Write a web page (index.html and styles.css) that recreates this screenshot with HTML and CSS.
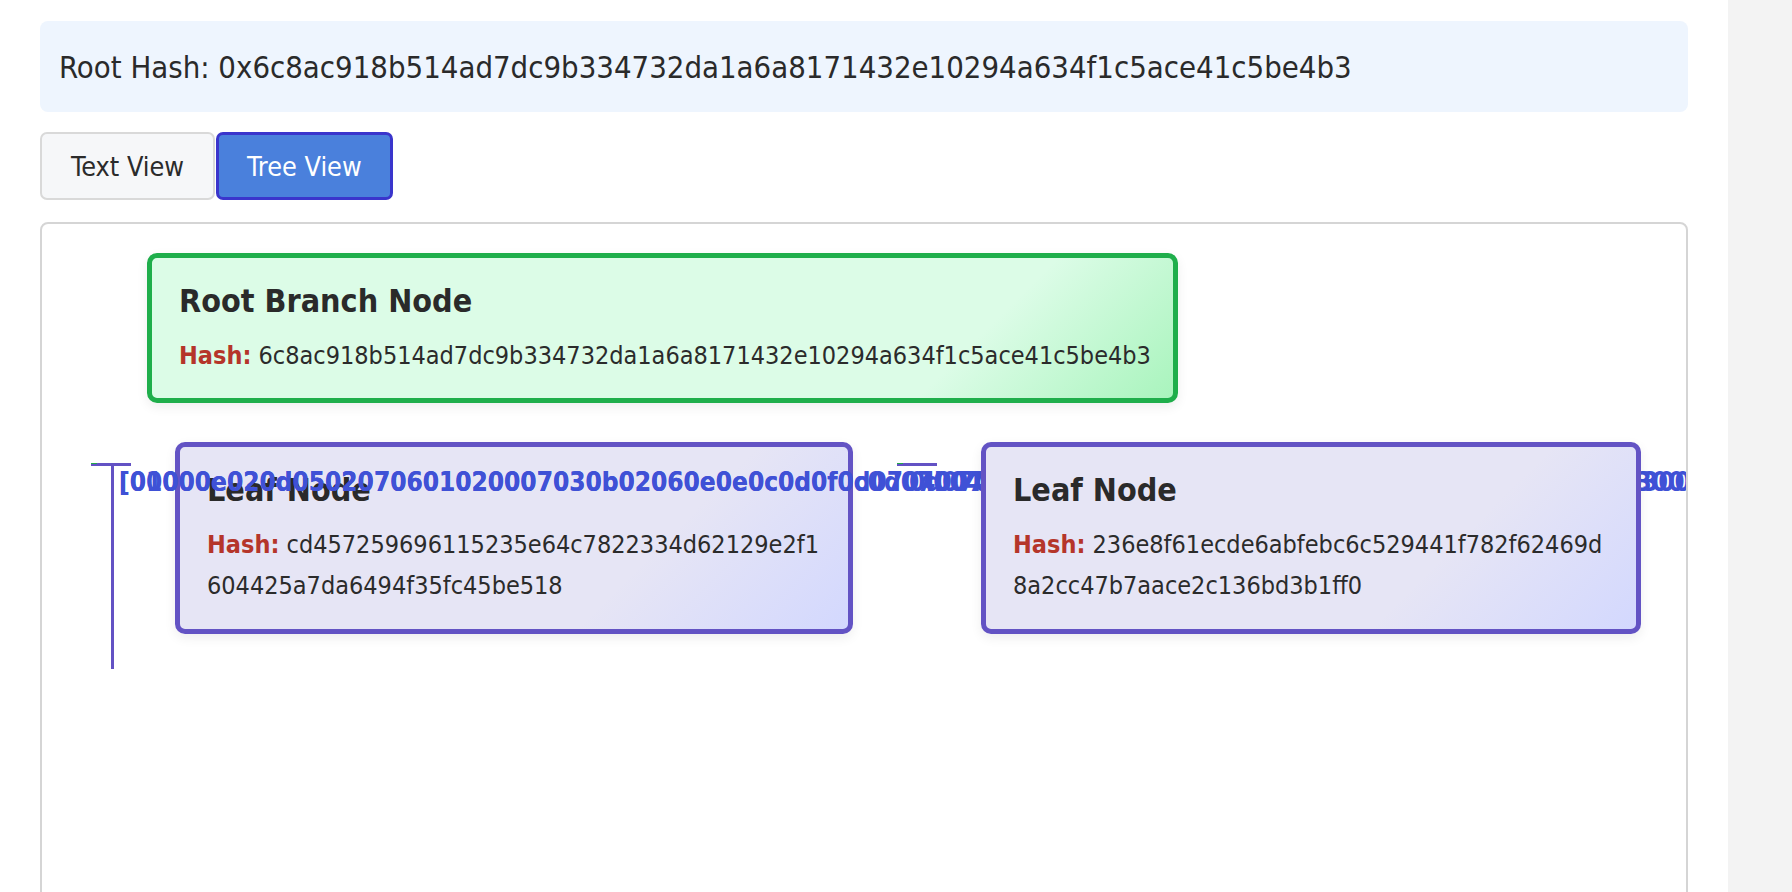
FILE: index.html
```html
<!DOCTYPE html>
<html lang="en">
<head>
<meta charset="utf-8">
<title>Merkle Tree Viewer</title>
<link rel="stylesheet" href="styles.css">
</head>
<body>
<div class="app">
  <main class="main">
    <div class="root-hash">Root Hash: 0x6c8ac918b514ad7dc9b334732da1a6a8171432e10294a634f1c5ace41c5be4b3</div>
    <div class="tabs">
      <button class="tab">Text View</button>
      <button class="tab active">Tree View</button>
    </div>
    <div class="tree">
      <div class="edge edge-h1"></div>
      <div class="edge-tip tip-1"></div>
      <div class="edge edge-v"></div>
      <div class="edge edge-h2"></div>
      <div class="edge-tip tip-2"></div>

      <div class="node root-node">
        <h3 class="node-title">Root Branch Node</h3>
        <div class="node-hash"><span class="hash-label">Hash:</span> 6c8ac918b514ad7dc9b334732da1a6a8171432e10294a634f1c5ace41c5be4b3</div>
      </div>

      <div class="node leaf-node leaf-a">
        <h3 class="node-title">Leaf Node</h3>
        <div class="node-hash"><span class="hash-label">Hash:</span> cd457259696115235e64c7822334d62129e2f1<br>604425a7da6494f35fc45be518</div>
      </div>

      <div class="labels">
        <span class="label l1">[01000e020d0502070601020007030b02060e0e0c0d0f0d07040070</span>
        <span class="label l2">[00000e020d0502070601020007030b02060e0e0c0d0f0c0d0700407</span>
        <span class="label l3">0d07070400170</span>
        <span class="label l4">0e0c0b03002f0]</span>
        <span class="label l5">b03002f0</span>
      </div>

      <div class="node leaf-node leaf-b">
        <h3 class="node-title">Leaf Node</h3>
        <div class="node-hash"><span class="hash-label">Hash:</span> 236e8f61ecde6abfebc6c529441f782f62469d<br>8a2cc47b7aace2c136bd3b1ff0</div>
      </div>
    </div>
  </main>
  <aside class="side"></aside>
</div>
</body>
</html>
```
FILE: styles.css
```css
html, body {
  margin: 0;
  padding: 0;
  height: 100%;
}
body {
  font-family: "DejaVu Sans Condensed", "DejaVu Sans", sans-serif;
  font-stretch: condensed;
  color: #2b2b2b;
  background: #ffffff;
  overflow: hidden;
}
.app {
  display: flex;
  height: 892px;
}
.main {
  width: 1728px;
  flex: none;
  box-sizing: border-box;
  padding: 21px 40px 0;
  background: #ffffff;
}
.side {
  flex: 1;
  background: #f3f3f3;
}
.root-hash {
  height: 91px;
  box-sizing: border-box;
  background: #eef5fe;
  border-radius: 8px;
  padding-left: 19px;
  display: flex;
  align-items: center;
  font-size: 30.8px;
  color: #2a2a2a;
  white-space: nowrap;
}
.tabs {
  display: flex;
  gap: 1px;
  margin-top: 20px;
  height: 68px;
}
.tab {
  font-family: inherit;
  font-stretch: condensed;
  font-size: 26.8px;
  padding: 0 29px;
  border: 2px solid #d9d9d9;
  background: #f6f7f9;
  border-radius: 7px;
  color: #2b2b2b;
  cursor: pointer;
}
.tab.active {
  background: #4a80dc;
  border: 3.5px solid #3a35cc;
  color: #ffffff;
  padding: 0 28px;
}
.tree {
  margin-top: 22px;
  border: 2px solid #d5d5d5;
  border-radius: 8px;
  height: 720px;
  position: relative;
  overflow: hidden;
}
.edge {
  position: absolute;
  background: #6352c4;
}
.edge-h1 { left: 49px; top: 239px; width: 40px; height: 3px; }
.edge-v { left: 69px; top: 239px; width: 3px; height: 206px; }
.edge-h2 { left: 855px; top: 239px; width: 40px; height: 3px; }
.edge-tip {
  position: absolute;
  background: #22a84a;
  width: 6px;
  height: 1px;
}
.tip-1 { left: 49px; top: 239px; }
.tip-2 { left: 855px; top: 239px; }

.node {
  position: absolute;
  box-sizing: border-box;
  border: 5px solid;
  border-radius: 10px;
  box-shadow: 0 4px 12px rgba(0, 0, 0, 0.07);
  padding: 25px 30px 0 27px;
  white-space: nowrap;
}
.node-title {
  font-weight: bold;
  font-size: 32px;
  line-height: 36px;
  margin: 0 0 16px;
  color: #2a2a2a;
}
.node-hash {
  font-size: 25px;
  line-height: 41px;
  color: #2b2b2b;
}
.hash-label {
  font-weight: bold;
  color: #b5352a;
}
.root-node {
  left: 105px;
  top: 29px;
  width: 1031px;
  height: 150px;
  border-color: #1fae4b;
  background: linear-gradient(135deg, #dcfce7 0%, #dcfce7 78%, #a9f4bd 100%);
}
.leaf-node {
  top: 218px;
  height: 192px;
  border-color: #6353c4;
  background: linear-gradient(135deg, #e6e5f5 0%, #e6e5f5 68%, #d3d8fe 100%);
}
.leaf-a { left: 133px; width: 678px; z-index: 1; }
.leaf-b { left: 939px; width: 660px; z-index: 3; }

.labels {
  position: absolute;
  left: 77px;
  top: 245px;
  width: 1600px;
  height: 30px;
  z-index: 2;
}
.label {
  position: absolute;
  top: 0;
  font-weight: bold;
  font-size: 26px;
  line-height: 26px;
  color: #3f51d6;
  white-space: nowrap;
}
.l1 { left: 0; }
.l2 { left: 0; }
.l3 { left: 790px; }
.l4 { left: 1405px; }
.l5 { left: 1490px; }
```
